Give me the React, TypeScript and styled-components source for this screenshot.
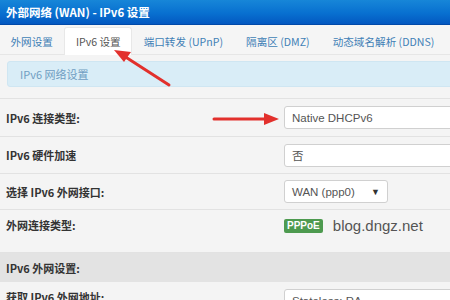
import React from "react";
import styled, { createGlobalStyle } from "styled-components";

const Global = createGlobalStyle`
  html, body { margin: 0; padding: 0; background: #f4f4f4; }
  body { width: 450px; height: 300px; overflow: hidden; }
  #root { width: 450px; height: 300px; overflow: hidden; position: relative; }
  * { box-sizing: border-box; }
`;

const FONT = `"Noto Sans CJK SC", "Liberation Sans", Arial, sans-serif`;
const LATIN = `"Liberation Sans", Arial, "Noto Sans CJK SC", sans-serif`;

const Page = styled.div`
  position: relative;
  width: 450px;
  height: 300px;
  overflow: hidden;
  font-family: ${FONT};
  background: #f4f4f4;
`;

const TitleBar = styled.div`
  height: 25px;
  display: flex;
  align-items: center;
  padding-left: 6px;
  background: linear-gradient(to bottom, #1786d8 0%, #0870d0 55%, #0358c0 100%);
  border-bottom: 1px solid #0049a8;
  color: #fff;
  font-size: 11.5px;
  font-weight: bold;
  white-space: nowrap;
`;

const TabBar = styled.div`
  height: 30px;
  display: flex;
  align-items: flex-end;
  background: #f5f5f5;
  border-bottom: 1px solid #e6e6e6;
  margin-left: -1px;
  white-space: nowrap;
`;

const Tab = styled.div<{ $active?: boolean }>`
  height: 28px;
  display: flex;
  align-items: center;
  padding: 0 10.5px;
  font-size: 10.6px;
  color: ${(p) => (p.$active ? "#555" : "#3f7fb6")};
  background: ${(p) => (p.$active ? "#fff" : "transparent")};
  border: 1px solid ${(p) => (p.$active ? "#e8e8e8" : "transparent")};
  border-bottom: none;
  border-radius: 3px 3px 0 0;
  margin-bottom: -1px;
`;

const Content = styled.div`
  padding-top: 6px;
`;

const Alert = styled.div`
  margin-left: 7px;
  margin-right: -10px;
  height: 26px;
  display: flex;
  align-items: center;
  padding-left: 12px;
  background: #d9edf7;
  border: 1px solid #cfe6f2;
  border-radius: 3px;
  color: #6f9dc2;
  font-size: 11px;
`;

const Form = styled.div`
  margin-top: 11px;
  border-top: 1px solid #e2e2e2;
`;

const Row = styled.div<{ $h: number; $top?: boolean }>`
  display: grid;
  grid-template-columns: 284px 1fr;
  align-items: ${(p) => (p.$top ? "start" : "center")};
  height: ${(p) => p.$h}px;
  padding-top: ${(p) => (p.$top ? "7px" : "0")};
  border-bottom: 1px solid #e2e2e2;
`;

const Label = styled.div`
  padding-left: 6px;
  font-size: 11px;
  font-weight: bold;
  color: #333;
  white-space: nowrap;
`;

const Section = styled.div`
  height: 29px;
  display: flex;
  align-items: center;
  padding-left: 6px;
  background: #e3e3e3;
  font-size: 11px;
  font-weight: bold;
  color: #333;
`;

const Input = styled.div<{ $w?: number }>`
  width: ${(p) => (p.$w ? `${p.$w}px` : "220px")};
  height: 23px;
  display: flex;
  align-items: center;
  justify-content: space-between;
  padding: 0 7px;
  background: #fff;
  border: 1px solid #d0d0d0;
  border-radius: 3px;
  font-family: ${LATIN};
  font-size: 11.5px;
  color: #555;
  white-space: nowrap;
`;

const Caret = styled.span`
  font-size: 9px;
  color: #333;
`;

const Inline = styled.div`
  display: flex;
  align-items: center;
  gap: 10px;
`;

const Badge = styled.span`
  display: inline-flex;
  align-items: center;
  height: 14px;
  padding: 0 3px;
  background: #4d9a4f;
  color: #fff;
  font-family: ${LATIN};
  font-size: 10px;
  font-weight: bold;
  border-radius: 2px;
`;

const Host = styled.span`
  font-family: ${LATIN};
  font-size: 15px;
  color: #555;
`;

const Overlay = styled.svg`
  position: absolute;
  left: 0;
  top: 0;
  pointer-events: none;
`;

export default function App() {
  return (
    <Page>
      <Global />
      <TitleBar>外部网络 (WAN) - IPv6 设置</TitleBar>
      <TabBar>
        <Tab>外网设置</Tab>
        <Tab $active>IPv6 设置</Tab>
        <Tab>端口转发 (UPnP)</Tab>
        <Tab>隔离区 (DMZ)</Tab>
        <Tab>动态域名解析 (DDNS)</Tab>
      </TabBar>
      <Content>
        <Alert>IPv6 网络设置</Alert>
        <Form>
          <Row $h={38}>
            <Label>IPv6 连接类型:</Label>
            <Input>Native DHCPv6</Input>
          </Row>
          <Row $h={37}>
            <Label>IPv6 硬件加速</Label>
            <Input>否</Input>
          </Row>
          <Row $h={36}>
            <Label>选择 IPv6 外网接口:</Label>
            <Input $w={104}>
              WAN (ppp0)<Caret>▼</Caret>
            </Input>
          </Row>
          <Row $h={43} $top>
            <Label>外网连接类型:</Label>
            <Inline>
              <Badge>PPPoE</Badge>
              <Host>blog.dngz.net</Host>
            </Inline>
          </Row>
          <Section>IPv6 外网设置:</Section>
          <Row $h={38} $top>
            <Label>获取 IPv6 外网地址:</Label>
            <Input>Stateless: RA</Input>
          </Row>
        </Form>
      </Content>
      <Overlay width="450" height="300" viewBox="0 0 450 300">
        <line x1="169" y1="85" x2="124" y2="56" stroke="#e2302c" strokeWidth="3" strokeLinecap="round" />
        <polygon points="114,50 131,52 124,62" fill="#e2302c" />
        <line x1="214" y1="119" x2="266" y2="119" stroke="#e2302c" strokeWidth="3" strokeLinecap="round" />
        <polygon points="279,119 264,113 264,125" fill="#e2302c" />
      </Overlay>
    </Page>
  );
}
